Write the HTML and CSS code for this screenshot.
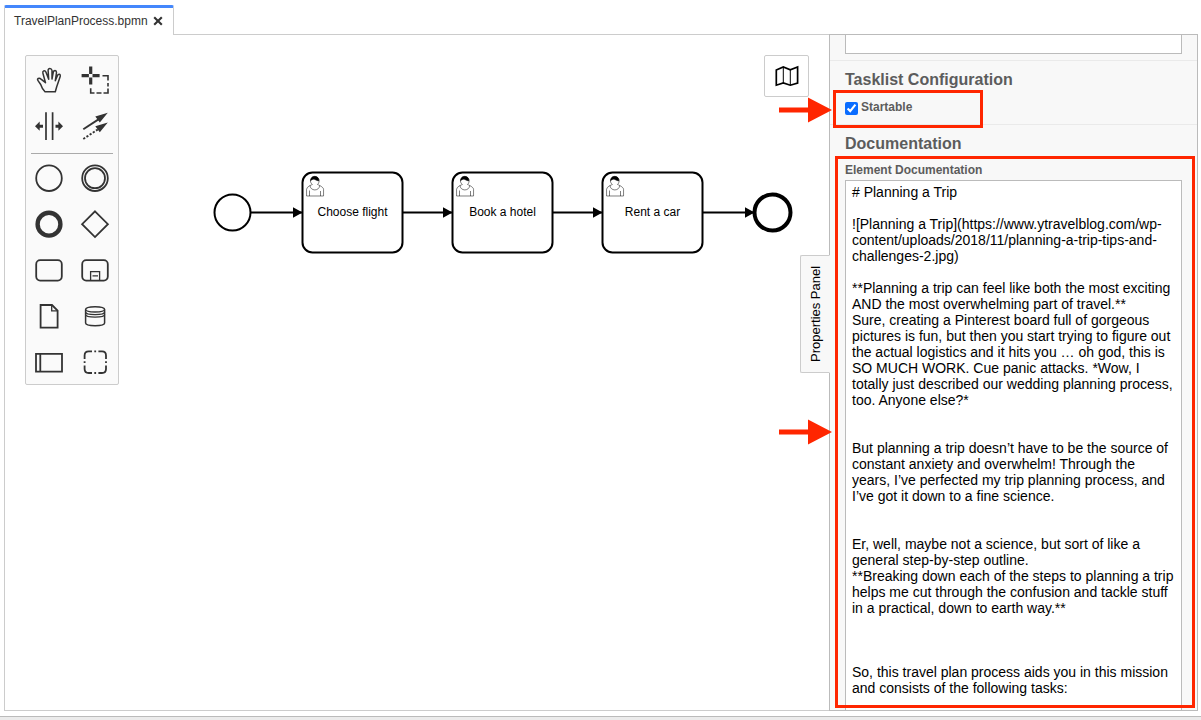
FILE: index.html
```html
<!DOCTYPE html>
<html lang="en">
<head>
<meta charset="utf-8">
<title>TravelPlanProcess.bpmn</title>
<link rel="stylesheet" href="styles.css">
</head>
<body>
<nav class="tabs">
  <div class="tab">
    <span class="tab-name">TravelPlanProcess.bpmn</span>
    <button class="tab-close" type="button" aria-label="Close tab">
      <svg width="10" height="10" viewBox="0 0 10 10"><path d="M1.2 1.2L8.8 8.8M8.8 1.2L1.2 8.8" stroke="#333" stroke-width="2.1"/></svg>
    </button>
  </div>
</nav>

<main class="editor">
  <section class="canvas">
    <svg class="diagram" role="img" aria-label="Travel plan process">
      <defs>
        <marker id="arrow" viewBox="0 0 10 11" refX="10" refY="5.5" markerWidth="10" markerHeight="11" markerUnits="userSpaceOnUse" orient="auto"><path d="M0 0L10 5.5L0 11Z"/></marker>
        <g id="user" stroke="#000" stroke-width="0.5">
          <path fill="#fff" d="m 15,12 c 0.909,-0.845 1.594,-2.049 1.594,-3.385 0,-2.554 -1.805,-4.622 -4.357,-4.622 -2.552,0 -4.288,2.068 -4.288,4.622 0,1.348 0.974,2.562 1.896,3.405 -0.529,0.187 -5.669,2.097 -5.794,4.756 v 6.718 h 17 v -6.718 c 0,-2.298 -5.528,-4.595 -6.051,-4.776 z m -8,6 l 0,5.5 m 11,0 l 0,-5"/>
          <path fill="none" d="m 15,12 m 2.162,1.009 c 0,2.447 -2.158,4.431 -4.821,4.431 -2.665,0 -4.822,-1.981 -4.822,-4.431"/>
          <path d="m 15,12 m -6.9,-3.8 c 0,0 2.251,-2.358 4.274,-1.177 2.024,1.181 4.221,1.537 4.124,0.965 -0.098,-0.57 -0.117,-3.791 -4.191,-4.136 -3.572,-0.001 -4.208,3.367 -4.208,4.348 z"/>
        </g>
        <g id="task">
          <rect width="100" height="80" rx="10" fill="#fff" stroke="#000" stroke-width="2"/>
          <use href="#user"/>
        </g>
      </defs>
      <g transform="translate(-5 -35)">
        <g stroke="#000" stroke-width="2">
          <path d="M250 212.5H302.5" marker-end="url(#arrow)"/>
          <path d="M403 212.5H452.5" marker-end="url(#arrow)"/>
          <path d="M553 212.5H602.5" marker-end="url(#arrow)"/>
          <path d="M703 212.5H754.5" marker-end="url(#arrow)"/>
        </g>
        <circle cx="232.5" cy="212.5" r="18" fill="#fff" stroke="#000" stroke-width="2"/>
        <use href="#task" x="302.5" y="172.5"/>
        <use href="#task" x="452.5" y="172.5"/>
        <use href="#task" x="602.5" y="172.5"/>
        <circle cx="772.5" cy="212.5" r="18" fill="#fff" stroke="#000" stroke-width="4"/>
        <text class="task-label" x="352.5" y="216">Choose flight</text>
        <text class="task-label" x="502.5" y="216">Book a hotel</text>
        <text class="task-label" x="652.5" y="216">Rent a car</text>
      </g>
    </svg>

    <div class="palette">
      <div class="tools">
        <button type="button" aria-label="Hand tool"><svg viewBox="0 -1 46 46"><path stroke-width="1.5" stroke-linejoin="round" d="M19 34.7H29.3L30.7 29.7L34.2 19.5Q34.5 17.3 33.2 17.2Q31.8 17.2 31.3 19L29.3 23.7L30.5 15.5Q30.5 13.5 29 13.4Q27.7 13.4 27.3 15L26 22V13.4Q25.5 11.4 23.9 11.4Q22.2 11.4 22.1 13.3L22.7 22.3L19.9 15Q19.2 13.4 17.7 13.9Q16.4 14.6 16.9 16.3L19.5 25.7L15 22.1Q13.6 20.8 12.2 21.5Q11 22.2 12 23.6L14.7 27.5Q16 31.7 19 34.7Z"/></svg></button>
        <button type="button" aria-label="Lasso tool"><svg viewBox="0 -1 46 46"><path stroke-width="3.2" d="M9.6 18.7H16.9M20.5 18.7H27.6M18.7 9.6V16.9M18.7 20.5V27.6"/><path stroke-width="1.6" d="M30.5 18.7H36V23.5M36 26V29.5M36 31.5V36H31.5M29.5 36H24.5M22.5 36H18.7V31.3"/></svg></button>
        <button type="button" aria-label="Space tool"><svg viewBox="0 -1 46 46"><path stroke-width="1.7" d="M20 9.3V37M26.6 9.3V37"/><path stroke-width="3" d="M17 23.2H12M29.5 23.2H34"/><path class="solid" d="M9 23.2L13.7 18.6V27.8ZM37 23.2L32.4 18.6V27.8Z"/></svg></button>
        <button type="button" aria-label="Connect tool"><svg viewBox="0 -1 46 46"><path stroke-width="1.9" d="M11.3 26.3L28 15.4"/><path stroke-width="1.9" stroke-dasharray="2.2 1.6" d="M11.3 36L28 25"/><path class="solid" d="M35.8 9.8L23.3 13.5L27.8 19.6ZM35.8 19.5L23.3 23.2L27.8 29.2Z"/></svg></button>
      </div>
      <hr class="separator">
      <div class="tools">
        <button type="button" aria-label="Start event"><svg viewBox="0 -1 46 46"><circle cx="23" cy="23.2" r="12.8"/></svg></button>
        <button type="button" aria-label="Intermediate event"><svg viewBox="0 -1 46 46"><circle cx="23" cy="23.2" r="12.8"/><circle cx="23" cy="23.2" r="10"/></svg></button>
        <button type="button" aria-label="End event"><svg viewBox="0 -1 46 46"><circle cx="23" cy="23.2" r="11.4" stroke-width="4.4"/></svg></button>
        <button type="button" aria-label="Gateway"><svg viewBox="0 -1 46 46"><path d="M23 10.3L35.9 23.2L23 36.1L10.1 23.2Z"/></svg></button>
        <button type="button" aria-label="Task"><svg viewBox="0 -1 46 46"><rect x="10.2" y="13.2" width="25.6" height="20.4" rx="4"/></svg></button>
        <button type="button" aria-label="Subprocess"><svg viewBox="0 -1 46 46"><rect x="10.2" y="13.2" width="25.6" height="20.4" rx="4"/><path stroke-width="1.3" d="M18.6 33.6V24.6H27.6V33.6M20.5 28.8H26"/></svg></button>
        <button type="button" aria-label="Data object"><svg viewBox="0 -1 46 46"><path d="M14.6 12H26L31.6 17.6V34.6H14.6Z"/><path stroke-width="1.3" d="M25.7 12V17.9H31.6"/></svg></button>
        <button type="button" aria-label="Data store"><svg viewBox="0 -1 46 46"><path stroke-width="1.5" d="M13.6 16.5C13.6 12.8 32.6 12.8 32.6 16.5V30C32.6 33.6 13.6 33.6 13.6 30Z"/><path stroke-width="1.3" d="M13.6 16.5C13.6 19.8 32.6 19.8 32.6 16.5M13.6 19C13.6 22.4 32.6 22.4 32.6 19M13.6 21.5C13.6 25 32.6 25 32.6 21.5"/></svg></button>
        <button type="button" aria-label="Participant"><svg viewBox="0 -1 46 46"><path d="M10 14.9H36V32.6H10ZM14.3 14.9V32.6"/></svg></button>
        <button type="button" aria-label="Group"><svg viewBox="0 -1 46 46"><path stroke-width="1.8" d="M12.6 20V16.5Q12.6 12.4 16.7 12.4H20M22.3 12.4H24.1M26.4 12.4H30Q34 12.4 34 16.5V20M34 22.3V24.1M34 26.4V30Q34 34 30 34H26.4M24.1 34H22.3M20 34H16.7Q12.6 34 12.6 30V26.4M12.6 24.1V22.3"/></svg></button>
      </div>
    </div>

    <button class="minimap" type="button" aria-label="Open minimap">
      <svg width="26" height="22" viewBox="0 0 26 22" fill="none" stroke="#000"><path stroke-width="1.7" d="M2.3 5L9.3 2L16.3 4.8L23.6 2V18L16.3 20.2L9.3 18L2.3 20.2Z"/><path stroke-width="1" d="M9.3 2V18M16.3 4.8V20.2"/></svg>
    </button>
  </section>

  <aside class="properties">
    <button class="panel-toggle" type="button">Properties Panel</button>
    <div class="panel-body">
      <section class="group group-first">
        <input class="field" type="text" aria-label="Value">
      </section>
      <section class="group">
        <h2>Tasklist Configuration</h2>
        <label class="check"><input type="checkbox" checked>Startable</label>
      </section>
      <section class="group">
        <h2>Documentation</h2>
        <label class="caption" for="docs">Element Documentation</label>
        <textarea class="docs" id="docs" rows="40" spellcheck="false"># Planning a Trip

![Planning a Trip](https://www.ytravelblog.com/wp-content/uploads/2018/11/planning-a-trip-tips-and-challenges-2.jpg)

**Planning a trip can feel like both the most exciting AND the most overwhelming part of travel.**
Sure, creating a Pinterest board full of gorgeous pictures is fun, but then you start trying to figure out the actual logistics and it hits you … oh god, this is SO MUCH WORK. Cue panic attacks. *Wow, I totally just described our wedding planning process, too. Anyone else?*


But planning a trip doesn’t have to be the source of constant anxiety and overwhelm! Through the years, I’ve perfected my trip planning process, and I’ve got it down to a fine science.


Er, well, maybe not a science, but sort of like a general step-by-step outline.
**Breaking down each of the steps to planning a trip helps me cut through the confusion and tackle stuff in a practical, down to earth way.**



So, this travel plan process aids you in this mission and consists of the following tasks:</textarea>
      </section>
    </div>
    <div class="highlight highlight-startable"></div>
    <div class="highlight highlight-docs"></div>
    <svg class="pointer pointer-startable" width="54" height="26" viewBox="0 0 54 26"><path d="M0 10.5H29V0.5L53 13L29 25.5V15.5H0Z"/></svg>
    <svg class="pointer pointer-docs" width="54" height="26" viewBox="0 0 54 26"><path d="M0 10.5H29V0.5L53 13L29 25.5V15.5H0Z"/></svg>
  </aside>
</main>
<footer class="status"></footer>
</body>
</html>
```

FILE: styles.css
```css
* {
  box-sizing: border-box;
}

body {
  margin: 0;
  height: 100vh;
  display: flex;
  flex-direction: column;
  overflow: hidden;
  background: #fff;
  font-family: "Liberation Sans", Arial, sans-serif;
  font-size: 12px;
  color: #333;
}

button {
  margin: 0;
  padding: 0;
  border: 0;
  background: none;
  font: inherit;
  color: inherit;
}

.tabs {
  display: flex;
  padding: 5px 4px 0;
}

.tab {
  z-index: 1;
  display: flex;
  align-items: center;
  gap: 5px;
  height: 30px;
  margin-bottom: -1px;
  padding: 0 10px 2px 9px;
  border: 1px solid #ccc;
  border-top: 3px solid #4487fc;
  border-bottom: 0;
  border-radius: 2px 2px 0 0;
  background: #fff;
}

.tab-close {
  display: flex;
}

.editor {
  flex: 1;
  min-height: 0;
  display: flex;
  margin: 0 3px 5px 4px;
  border: 1px solid #ccc;
  border-right: 0;
}

.canvas {
  position: relative;
  flex: 1;
}

.diagram {
  position: absolute;
  width: 100%;
  height: 100%;
}

.task-label {
  font-size: 12px;
  text-anchor: middle;
  fill: #000;
}

.palette {
  position: absolute;
  top: 20px;
  left: 20px;
  border: 1px solid #ccc;
  border-radius: 2px;
  background: #fafafa;
}

.tools {
  display: grid;
  grid-template-columns: 46px 46px;
}

.tools button {
  height: 46px;
}

.tools svg {
  display: block;
  fill: none;
  stroke: #333;
  stroke-width: 1.8;
}

.tools .solid {
  fill: #333;
  stroke: none;
}

.separator {
  margin: 5px 5px 0;
  border: 0;
  border-top: 1px solid #aaa;
}

.minimap {
  position: absolute;
  top: 20px;
  right: 20px;
  display: grid;
  place-items: center;
  width: 45px;
  height: 42px;
  border: 1px solid #ccc;
  border-radius: 2px;
  background: #fff;
}

.properties {
  position: relative;
  width: 369px;
  margin: -1px 0;
}

.panel-body {
  height: 100%;
  overflow: hidden;
  border: 1px solid #bbb;
  background: #f8f8f8;
}

.panel-toggle {
  position: absolute;
  top: 221px;
  left: -29px;
  width: 30px;
  height: 118px;
  border: 1px solid #ccc;
  border-left-color: #f8f8f8;
  border-radius: 0 2px 2px 0;
  background: #f8f8f8;
  font-size: 13px;
  color: #000;
  writing-mode: vertical-rl;
  transform: rotate(180deg);
}

.group {
  display: flex;
  flex-direction: column;
  padding: 10px 15px 8px;
  border-bottom: 1px solid #eaeaea;
}

.group-first {
  padding: 0 15px 6px;
}

.field {
  height: 19px;
  border: 1px solid #bbb;
  border-top: 0;
  background: #fff;
}

.group h2 {
  margin: 0 0 9px;
  font-size: 16px;
  line-height: 18px;
  color: #5c5c5c;
}

.check {
  display: flex;
  align-items: center;
  gap: 3px;
  font-weight: bold;
  line-height: 18px;
  color: #5c5c5c;
}

.check input {
  width: 13px;
  height: 13px;
  margin: 2px 0 0;
  accent-color: #0a6cff;
}

.caption {
  margin-bottom: 2px;
  font-weight: bold;
  line-height: 16px;
  color: #5c5c5c;
}

.docs {
  padding: 3px 6px;
  border: 1px solid #bbb;
  border-radius: 0;
  background: #fff;
  font: 14px/16px "Liberation Sans", Arial, sans-serif;
  color: #000;
  resize: none;
  overflow: hidden;
}

.highlight {
  position: absolute;
  border: 3px solid #ff2600;
  pointer-events: none;
}

.highlight-startable {
  top: 56px;
  left: 4px;
  width: 150px;
  height: 38px;
}

.highlight-docs {
  top: 122px;
  right: 3px;
  bottom: 3px;
  left: 6px;
}

.pointer {
  position: absolute;
  left: -50px;
  fill: #ff2600;
}

.pointer-startable {
  top: 63px;
}

.pointer-docs {
  top: 385px;
}

.status {
  height: 4px;
  border-top: 1px solid #bbb;
  background: #ebebeb;
}
```
